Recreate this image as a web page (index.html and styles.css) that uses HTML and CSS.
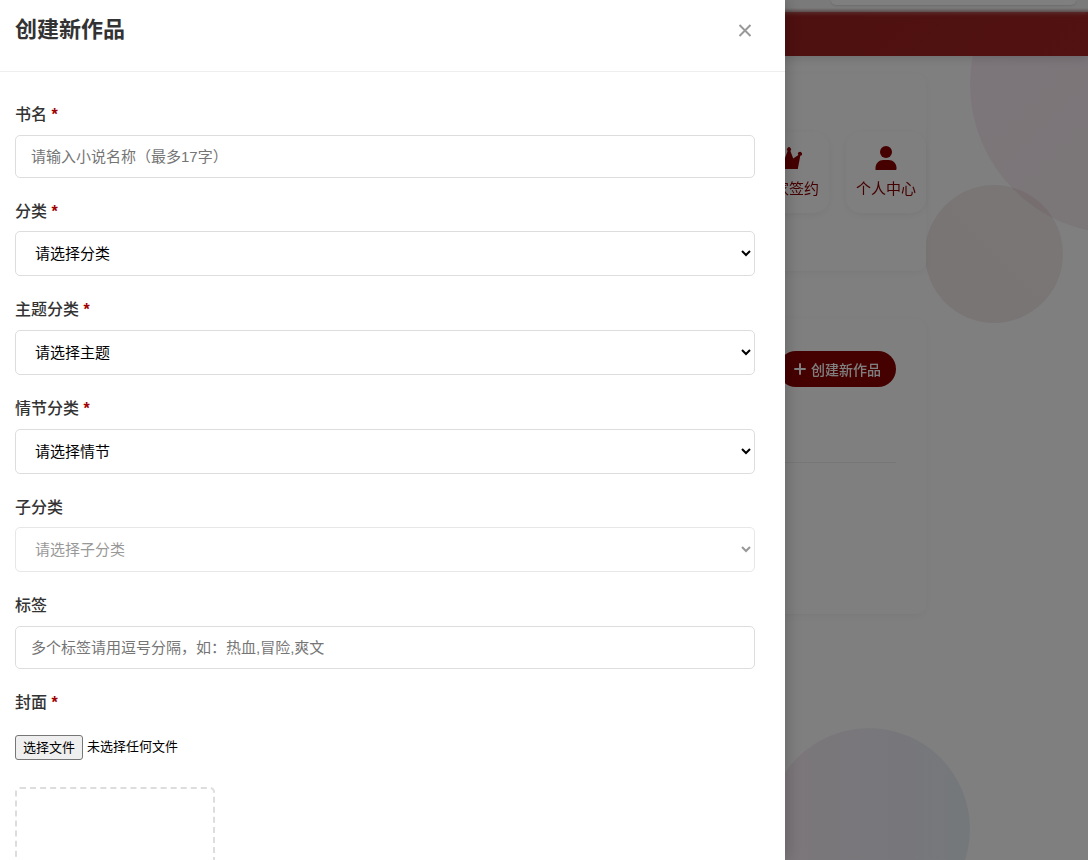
FILE: index.html
```html
<!DOCTYPE html>
<html lang="zh-CN">
<head>
  <meta charset="utf-8">
  <meta name="viewport" content="width=device-width, initial-scale=1">
  <title>创建新作品</title>
  <link rel="stylesheet" href="styles.css">
</head>
<body>
  <div class="bg-shape shape-1"></div>
  <div class="bg-shape shape-2"></div>
  <div class="bg-shape shape-3"></div>

  <header class="topbar">
    <div class="search-pill"></div>
  </header>
  <nav class="navbar"></nav>

  <main class="container">
    <section class="card quick-card">
      <a href="#" class="quick-item">
        <svg viewBox="0 0 28 28" width="28" height="28"><path d="M5.500 25 3.300 11.800a2 2 0 1 1 1.900-.8l4.600 3.400 2.800-7.500a2.100 2.100 0 1 1 2.800 0l2.800 7.500 5.200-3.400a2 2 0 1 1 1.900.8L22.800 25z"/></svg>
        <span>作家签约</span>
      </a>
      <a href="#" class="quick-item">
        <svg viewBox="0 0 28 28" width="28" height="28"><circle cx="14" cy="8" r="6"/><path d="M3.500 26v-2c0-4.500 3.500-8 8-8h5c4.500 0 8 3.500 8 8v1a1 1 0 0 1-1 1z"/></svg>
        <span>个人中心</span>
      </a>
    </section>

    <section class="card works-card">
      <div class="works-header">
        <button type="button" class="create-btn">
          <svg viewBox="0 0 14 14" width="14" height="14"><path d="M7 2v10M2 7h10"/></svg>
          <span>创建新作品</span>
        </button>
      </div>
    </section>
  </main>

  <div class="overlay"></div>

  <div class="drawer" role="dialog" aria-labelledby="drawer-title">
    <div class="drawer-header">
      <h2 id="drawer-title">创建新作品</h2>
      <button type="button" class="close-btn" aria-label="关闭">
        <svg viewBox="0 0 20 20" width="20" height="20"><path d="M4.500 5l11 11M15.500 5l-11 11"/></svg>
      </button>
    </div>

    <form class="drawer-body">
      <div class="form-group">
        <label for="book-name">书名 <span class="required">*</span></label>
        <input type="text" id="book-name" class="form-control" placeholder="请输入小说名称（最多17字）">
      </div>
      <div class="form-group">
        <label for="category">分类 <span class="required">*</span></label>
        <select id="category" class="form-control">
          <option>请选择分类</option>
        </select>
      </div>
      <div class="form-group">
        <label for="theme">主题分类 <span class="required">*</span></label>
        <select id="theme" class="form-control">
          <option>请选择主题</option>
        </select>
      </div>
      <div class="form-group">
        <label for="plot">情节分类 <span class="required">*</span></label>
        <select id="plot" class="form-control">
          <option>请选择情节</option>
        </select>
      </div>
      <div class="form-group">
        <label for="sub-category">子分类</label>
        <select id="sub-category" class="form-control" disabled>
          <option>请选择子分类</option>
        </select>
      </div>
      <div class="form-group">
        <label for="tags">标签</label>
        <input type="text" id="tags" class="form-control" placeholder="多个标签请用逗号分隔，如：热血,冒险,爽文">
      </div>
      <div class="form-group">
        <label for="cover">封面 <span class="required">*</span></label>
        <div class="file-picker">
          <input type="file" id="cover" accept="image/*">
          <label for="cover" class="file-btn">选择文件</label>
          <span>未选择任何文件</span>
        </div>
        <div class="cover-preview"></div>
      </div>
    </form>
  </div>
</body>
</html>
```

FILE: styles.css
```css
:root {
  --primary: #8b0000;
  --text: #333;
  --border: #ddd;
}

* {
  box-sizing: border-box;
  margin: 0;
  padding: 0;
}

body {
  min-height: 100vh;
  font-family: "Liberation Sans", "Noto Sans CJK SC", sans-serif;
  line-height: 1.6;
  color: var(--text);
  background: #fff;
  overflow: hidden;
}

/* Decorative background */
.bg-shape {
  position: fixed;
  z-index: -1;
  border-radius: 50%;
  opacity: 0.1;
}

.shape-1 {
  top: -66px;
  right: -182px;
  width: 300px;
  height: 300px;
  background: linear-gradient(135deg, #d050c0, #a04040);
}

.shape-2 {
  top: 185px;
  right: 25px;
  width: 138px;
  height: 138px;
  background: linear-gradient(45deg, #a03030, #905040);
}

.shape-3 {
  top: 728px;
  right: 118px;
  width: 202px;
  height: 202px;
  background: linear-gradient(90deg, #c050a0, #3070b0);
}

/* Page header */
.topbar {
  position: relative;
  z-index: 1;
  height: 12px;
  padding: 0 12px;
  background: linear-gradient(#f4f4f4 8px, #b99a9a);
  box-shadow: 0 1px 4px rgba(200, 160, 160, 0.6);
}

.search-pill {
  width: 23%;
  height: 5px;
  margin-left: auto;
  border-radius: 0 0 16px 16px;
  background: #fff;
  box-shadow: 0 1px 2px rgba(0, 0, 0, 0.1);
}

.navbar {
  height: 44px;
  background: linear-gradient(135deg, #8e1616, #a42424);
  box-shadow: 0 2px 10px rgba(0, 0, 0, 0.15);
}

.container {
  margin: 18px 162px 0 15%;
}

.card {
  margin-bottom: 48px;
  border-radius: 10px;
  background: #fff;
  box-shadow: 0 2px 10px rgba(0, 0, 0, 0.05);
}

.quick-card {
  display: flex;
  justify-content: flex-end;
  align-items: flex-start;
  gap: 17px;
  padding: 58px 0;
}

.quick-item {
  display: flex;
  flex-direction: column;
  align-items: center;
  gap: 5px;
  padding: 12px 10px;
  border-radius: 15px;
  color: var(--primary);
  font-size: 15px;
  text-decoration: none;
  box-shadow: 0 2px 8px rgba(0, 0, 0, 0.06);
}

.quick-item svg {
  fill: currentColor;
}

.works-card {
  min-height: 295px;
  padding: 32px 30px;
}

.works-header {
  display: flex;
  justify-content: flex-end;
  padding-bottom: 75px;
  border-bottom: 1px solid #eee;
}

.create-btn {
  display: flex;
  align-items: center;
  gap: 4px;
  height: 36px;
  padding: 0 15px;
  border: none;
  border-radius: 18px;
  background: var(--primary);
  color: #fff;
  font-family: inherit;
  font-size: 14px;
  font-weight: 500;
}

.create-btn svg {
  fill: none;
  stroke: currentColor;
  stroke-width: 2;
  stroke-linecap: round;
}

/* Drawer */
.overlay {
  position: fixed;
  inset: 0;
  z-index: 10;
  background: rgba(0, 0, 0, 0.5);
}

.drawer {
  position: fixed;
  top: 0;
  bottom: 0;
  left: 0;
  z-index: 11;
  width: 80%;
  max-width: 785px;
  background: #fff;
  box-shadow: 2px 0 15px rgba(0, 0, 0, 0.2);
  overflow-y: auto;
  scrollbar-width: none;
}

.drawer-header {
  display: flex;
  justify-content: space-between;
  align-items: center;
  padding: 12px 30px 24px 15px;
  border-bottom: 1px solid #eee;
}

.drawer-header h2 {
  font-size: 22px;
  font-weight: 700;
}

.close-btn {
  display: flex;
  border: none;
  background: none;
  color: #999;
  cursor: pointer;
}

.close-btn svg {
  fill: none;
  stroke: currentColor;
  stroke-width: 2;
}

.drawer-body {
  padding: 30px 30px 30px 15px;
}

.form-group {
  margin-bottom: 21px;
}

.form-group > label {
  display: block;
  margin-bottom: 7px;
  font-size: 16px;
  font-weight: 500;
}

.required {
  color: #a00000;
  font-weight: 700;
}

.form-control {
  display: block;
  width: 100%;
  height: 43px;
  padding: 0 15px;
  border: 1px solid var(--border);
  border-radius: 5px;
  background: #fff;
  font-family: inherit;
  font-size: 15px;
}

select.form-control {
  height: 45px;
  color: #000;
}

select.form-control:disabled {
  color: #6d6d6d;
  opacity: 0.7;
}

.file-picker {
  position: relative;
  display: flex;
  align-items: center;
  gap: 4px;
  margin: 20px 0 27px;
  color: #000;
  font-size: 13px;
}

.file-picker input {
  position: absolute;
  width: 1px;
  height: 1px;
  opacity: 0;
}

.file-btn {
  padding: 0 7px;
  border: 1px solid #767676;
  border-radius: 3px;
  background: #efefef;
  line-height: 23px;
}

.cover-preview {
  width: 200px;
  height: 260px;
  border: 2px dashed var(--border);
  border-radius: 5px;
}
```
